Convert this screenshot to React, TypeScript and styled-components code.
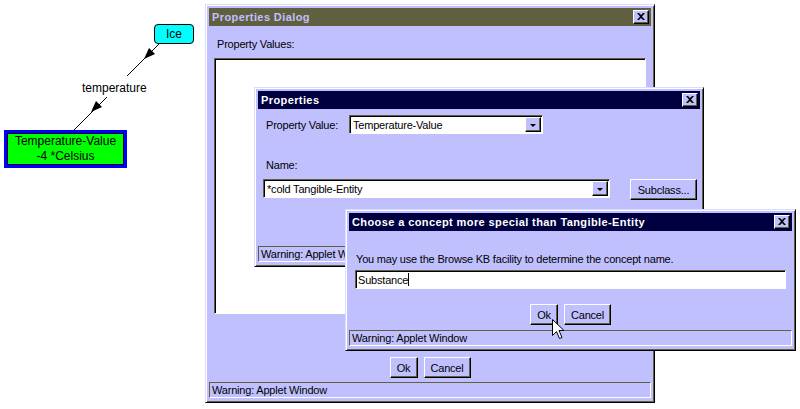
import React from "react";
import styled, { createGlobalStyle, css } from "styled-components";

const LAV = "#c0c0ff";
const DARK = "#606040";

const GlobalStyle = createGlobalStyle`
  html, body { margin: 0; padding: 0; background: #ffffff; }
  body { font-family: "Liberation Sans", Arial, sans-serif; }
`;

const Desktop = styled.div`
  position: relative;
  width: 800px;
  height: 409px;
  overflow: hidden;
  background: #ffffff;
  font-family: "Liberation Sans", Arial, sans-serif;
  font-size: 11px;
  color: #000;
`;

/* ---------- concept graph ---------- */
const Edges = styled.svg`
  position: absolute;
  left: 0;
  top: 0;
`;

const Node = styled.div<{ $x: number; $y: number; $w: number; $h: number; $kind: "concept" | "value" }>`
  position: absolute;
  left: ${(p) => p.$x}px;
  top: ${(p) => p.$y}px;
  width: ${(p) => p.$w}px;
  height: ${(p) => p.$h}px;
  box-sizing: border-box;
  display: flex;
  flex-direction: column;
  align-items: center;
  justify-content: center;
  font-size: 12px;
  line-height: 15px;
  white-space: nowrap;
  ${(p) =>
    p.$kind === "concept"
      ? css`
          background: #00ffff;
          border: 1px solid #000;
          border-radius: 4px;
        `
      : css`
          background: #00ff00;
          border: 3px solid #0000ff;
          box-shadow: inset 0 0 0 1px #000030;
        `}
`;

const EdgeLabel = styled.div<{ $x: number; $y: number }>`
  position: absolute;
  left: ${(p) => p.$x}px;
  top: ${(p) => p.$y}px;
  font-size: 12px;
  line-height: 14px;
  background: #fff;
  white-space: nowrap;
`;

/* ---------- windows ---------- */
const Win = styled.section<{ $x: number; $y: number; $w: number; $h: number }>`
  position: absolute;
  left: ${(p) => p.$x}px;
  top: ${(p) => p.$y}px;
  width: ${(p) => p.$w}px;
  height: ${(p) => p.$h}px;
  box-sizing: border-box;
  display: flex;
  flex-direction: column;
  background: ${LAV};
  border: 1px solid;
  border-color: #dcdcff #000 #000 #dcdcff;
  box-shadow: inset 1px 1px #ffffff, inset -1px -1px ${DARK};
  padding: 3px;
  letter-spacing: -0.2px;
  overflow: hidden;
`;

const TitleBar = styled.header<{ $active?: boolean }>`
  height: 18px;
  flex: none;
  display: flex;
  align-items: center;
  justify-content: space-between;
  padding: 0 2px 0 3px;
  background: ${(p) => (p.$active ? "#000040" : "#606040")};
  color: ${(p) => (p.$active ? "#ffffff" : LAV)};
  font-weight: bold;
  font-size: 11px;
  letter-spacing: 0.4px;
  white-space: nowrap;
`;

const raised = css`
  box-sizing: border-box;
  background: ${LAV};
  border: 1px solid;
  border-color: #ffffff #000 #000 #ffffff;
  box-shadow: inset -1px -1px ${DARK};
`;

const CloseBtn = styled.span`
  ${raised};
  width: 16px;
  height: 14px;
  display: flex;
  align-items: center;
  justify-content: center;
  padding-bottom: 1px;
`;

const FieldLabel = styled.div<{ $mt?: number; $ml?: number; $w?: number }>`
  height: 14px;
  line-height: 14px;
  margin-top: ${(p) => p.$mt ?? 0}px;
  margin-left: ${(p) => p.$ml ?? 0}px;
  ${(p) => (p.$w ? `width: ${p.$w}px; flex: none;` : "")}
  white-space: nowrap;
`;

const sunken = css`
  box-sizing: border-box;
  background: #ffffff;
  border: 1px solid;
  border-color: ${DARK} #ffffff #ffffff ${DARK};
  box-shadow: inset 1px 1px #000;
`;

const ListBox = styled.div<{ $h: number }>`
  ${sunken};
  height: ${(p) => p.$h}px;
  margin: 7px 5px 0;
  flex: none;
`;

const FormRow = styled.div<{ $mt: number; $ml: number }>`
  display: flex;
  align-items: flex-start;
  margin-top: ${(p) => p.$mt}px;
  margin-left: ${(p) => p.$ml}px;
  flex: none;
`;

const FormRowCentered = styled(FormRow)`
  align-items: center;
`;

const Combo = styled.div<{ $w: number }>`
  ${sunken};
  width: ${(p) => p.$w}px;
  height: 19px;
  display: flex;
  align-items: center;
  padding-left: 3px;
  flex: none;
`;

const ComboText = styled.span`
  flex: 1;
  white-space: nowrap;
  line-height: 14px;
`;

const DropButton = styled.span`
  ${raised};
  width: 16px;
  height: 15px;
  margin-right: 1px;
  display: flex;
  align-items: center;
  justify-content: center;
  padding-right: 1px;
`;

const DropArrow = styled.span`
  width: 0;
  height: 0;
  border-left: 3px solid transparent;
  border-right: 3px solid transparent;
  border-top: 3px solid #000;
  margin-top: 1px;
`;

const TextInput = styled.div`
  ${sunken};
  height: 19px;
  margin: 4px 6px 0;
  padding-left: 2px;
  display: flex;
  align-items: center;
  flex: none;
  white-space: nowrap;
`;

const Caret = styled.span`
  display: inline-block;
  width: 1px;
  height: 13px;
  background: #000;
`;

const ButtonRow = styled.div<{ $mt: number }>`
  display: flex;
  justify-content: center;
  gap: 6px;
  margin-top: ${(p) => p.$mt}px;
  flex: none;
`;

const Button = styled.span<{ $w: number; $ml?: number }>`
  ${raised};
  width: ${(p) => p.$w}px;
  height: 21px;
  margin-left: ${(p) => p.$ml ?? 0}px;
  display: flex;
  align-items: center;
  justify-content: center;
  flex: none;
  white-space: nowrap;
`;

const StatusBar = styled.footer`
  margin-top: auto;
  margin-bottom: 1px;
  height: 16px;
  flex: none;
  box-sizing: border-box;
  border: 1px solid;
  border-color: ${DARK} #ffffff #ffffff ${DARK};
  padding-left: 2px;
  line-height: 14px;
  white-space: nowrap;
  overflow: hidden;
`;

const Pointer = styled.svg`
  position: absolute;
  left: 552px;
  top: 319px;
`;

const CloseIcon = () => (
  <svg width="8" height="7" viewBox="0 0 8 7">
    <path d="M0 0h2l2 2 2-2h2L5 3.5 8 7H6L4 5 2 7H0l3-3.5z" fill="#000" />
  </svg>
);

const Close = () => (
  <CloseBtn>
    <CloseIcon />
  </CloseBtn>
);

const Drop = () => (
  <DropButton>
    <DropArrow />
  </DropButton>
);

export default function App() {
  return (
    <Desktop>
      <GlobalStyle />

      <Edges width="200" height="180" viewBox="0 0 200 180">
        <line x1="160" y1="43" x2="127" y2="76" stroke="#000" strokeWidth="1" />
        <polygon points="144,59 155,54 149,48" fill="#000" />
        <line x1="107" y1="97" x2="73" y2="131" stroke="#000" strokeWidth="1" />
        <polygon points="91,112 102,107 96,101" fill="#000" />
      </Edges>
      <Node $x={154} $y={24} $w={40} $h={20} $kind="concept">
        Ice
      </Node>
      <EdgeLabel $x={82} $y={81}>temperature</EdgeLabel>
      <Node $x={4} $y={130} $w={123} $h={38} $kind="value">
        <span>Temperature-Value</span>
        <span>-4 *Celsius</span>
      </Node>

      <Win $x={205} $y={4} $w={450} $h={399}>
        <TitleBar>
          Properties Dialog
          <Close />
        </TitleBar>
        <FieldLabel $mt={11} $ml={8}>
          Property Values:
        </FieldLabel>
        <ListBox $h={256} />
        <ButtonRow $mt={43}>
          <Button $w={28}>Ok</Button>
          <Button $w={47}>Cancel</Button>
        </ButtonRow>
        <StatusBar>Warning: Applet Window</StatusBar>
      </Win>

      <Win $x={254} $y={87} $w={450} $h={180}>
        <TitleBar $active>
          Properties
          <Close />
        </TitleBar>
        <FormRowCentered $mt={6} $ml={8}>
          <FieldLabel $w={83}>Property Value:</FieldLabel>
          <Combo $w={194}>
            <ComboText>Temperature-Value</ComboText>
            <Drop />
          </Combo>
        </FormRowCentered>
        <FieldLabel $mt={24} $ml={8}>
          Name:
        </FieldLabel>
        <FormRow $mt={7} $ml={5}>
          <Combo $w={347}>
            <ComboText>*cold Tangible-Entity</ComboText>
            <Drop />
          </Combo>
          <Button $w={67} $ml={20}>
            Subclass...
          </Button>
        </FormRow>
        <StatusBar>Warning: Applet Window</StatusBar>
      </Win>

      <Win $x={345} $y={209} $w={451} $h={142}>
        <TitleBar $active>
          Choose a concept more special than Tangible-Entity
          <Close />
        </TitleBar>
        <FieldLabel $mt={21} $ml={7}>
          You may use the Browse KB facility to determine the concept name.
        </FieldLabel>
        <TextInput>
          Substance
          <Caret />
        </TextInput>
        <ButtonRow $mt={15}>
          <Button $w={28}>Ok</Button>
          <Button $w={47}>Cancel</Button>
        </ButtonRow>
        <StatusBar>Warning: Applet Window</StatusBar>
      </Win>

      <Pointer width="13" height="21" viewBox="0 0 13 21">
        <path
          d="M0.5 0.5 L0.5 16.5 L4.5 12.5 L7.5 19.5 L10 18.5 L7 11.5 L12 11.5 Z"
          fill="#fff"
          stroke="#000"
          strokeWidth="1"
        />
      </Pointer>
    </Desktop>
  );
}
